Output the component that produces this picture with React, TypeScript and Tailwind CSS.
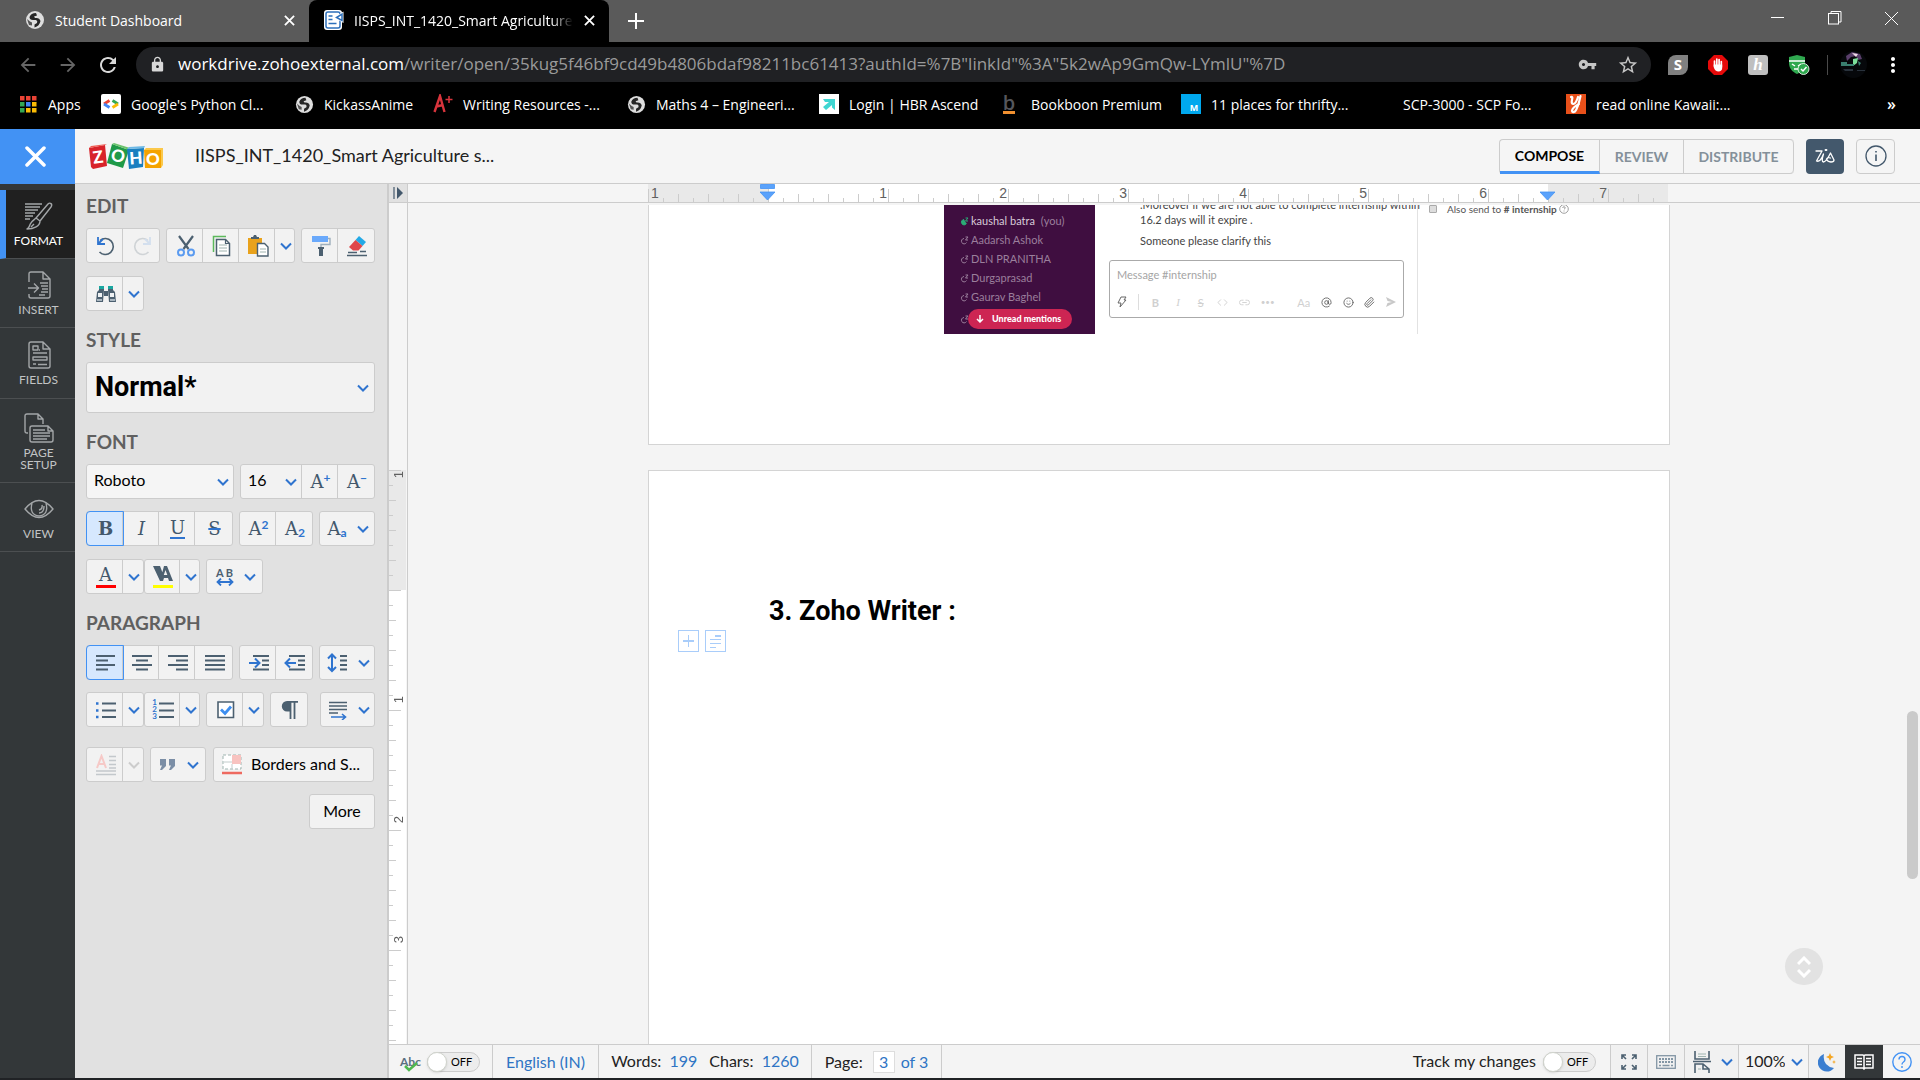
import React from "react";
import { MdArrowBack, MdArrowForward, MdRefresh, MdLock, MdVpnKey, MdStarBorder, MdMoreVert } from "react-icons/md";
import { FiAtSign, FiSmile, FiPaperclip, FiLink2, FiCode } from "react-icons/fi";

type Kids = { children?: React.ReactNode };

const SLATE = "#4c6070";
const BLUE = "#2f74cf";

/* ---------- browser chrome ---------- */

function Globe({ size = 20 }: { size?: number }) {
  return (
    <svg width={size} height={size} viewBox="0 0 20 20" aria-hidden="true">
      <circle cx="10" cy="10" r="9" fill="#dedede" />
      <path d="M11 3Q6 3 4.500 7q0 3 3.500 3h3q2 1 1 3l-2.500 1.500v3q5-1.500 6-6.500-1-3-4-3h-1.500L9 6.500l3-1z" fill="#262626" />
      <path d="M2 9l3 2.500 2 1v3L4 15z" fill="#555" />
    </svg>
  );
}

function WriterIcon() {
  return (
    <svg width="20" height="20" viewBox="0 0 20 20" aria-hidden="true">
      <rect x="0" y="0" width="18" height="20" rx="3" fill="#fff" />
      <rect x="2" y="2" width="14" height="16" rx="2" fill="#fff" stroke="#2c6fbb" strokeWidth="1.500" />
      <path d="M4.500 6h4M4.500 9.500h4M4.500 13.500h8" stroke="#2c6fbb" strokeWidth="1.600" />
      <path d="M19.500 1.500v11.500L10 7.500z" fill="#fff" />
      <path d="M18 4v6.500L12.500 7.500z" fill="#fff" stroke="#2c6fbb" strokeWidth="1.500" />
    </svg>
  );
}

function CloseX({ size = 11 }: { size?: number }) {
  return (
    <svg width={size} height={size} viewBox="0 0 12 12" aria-hidden="true">
      <path d="M1 1l10 10M11 1L1 11" stroke="#fff" strokeWidth="2" />
    </svg>
  );
}

function TabStrip() {
  return (
    <div className="flex h-[42px] items-stretch bg-[#5a5a5a] text-white">
      <div className="flex w-[309px] items-center pr-2.5 pb-0.5 pl-[25px] text-[14px]">
        <Globe />
        <span className="ml-2.5 grow">Student Dashboard</span>
        <button aria-label="Close tab" className="flex size-5 items-center justify-center"><CloseX /></button>
      </div>
      <div className="flex w-[300px] items-center rounded-t-lg bg-black pr-2.5 pb-0.5 pl-[15px] text-[14px]">
        <WriterIcon />
        <span className="ml-2.5 w-[219px] grow overflow-hidden whitespace-nowrap [mask-image:linear-gradient(90deg,#000_90%,transparent)]">
          IISPS_INT_1420_Smart Agriculture
        </span>
        <button aria-label="Close tab" className="ml-1.5 flex size-5 items-center justify-center"><CloseX /></button>
      </div>
      <button aria-label="New tab" className="flex w-[54px] items-center justify-center">
        <svg width="16" height="16" viewBox="0 0 16 16" aria-hidden="true"><path d="M8 0v16M0 8h16" stroke="#fff" strokeWidth="2" /></svg>
      </button>
      <div className="ml-auto flex pb-1.5">
        <button aria-label="Minimize" className="flex w-[57px] items-center justify-center">
          <svg width="13" height="2" aria-hidden="true"><rect width="13" height="1" fill="#fff" /></svg>
        </button>
        <button aria-label="Restore" className="flex w-[57px] items-center justify-center">
          <svg width="14" height="14" viewBox="0 0 14 14" fill="none" stroke="#fff" aria-hidden="true">
            <rect x=".5" y="2.500" width="10" height="10.500" /><path d="M3 2.500V.5h10v10.500h-2.500" />
          </svg>
        </button>
        <button aria-label="Close window" className="flex w-[57px] items-center justify-center">
          <svg width="13" height="13" viewBox="0 0 13 13" aria-hidden="true"><path d="M0 0l13 13M13 0L0 13" stroke="#fff" /></svg>
        </button>
      </div>
    </div>
  );
}

function AddressBar() {
  return (
    <div className="flex h-[45px] items-center bg-black pr-[15px] pl-4 text-[#d8d8d8]">
      <button aria-label="Back" className="mr-4 flex size-6 items-center justify-center text-[#666]"><MdArrowBack size={22} /></button>
      <button aria-label="Forward" className="mr-4 flex size-6 items-center justify-center text-[#666]"><MdArrowForward size={22} /></button>
      <button aria-label="Reload" className="mr-4 flex size-6 items-center justify-center"><MdRefresh size={24} /></button>
      <div className="flex h-[35px] grow items-center rounded-full bg-[#202124] pr-3 pl-[13px]">
        <MdLock size={17} />
        <div
          role="textbox"
          aria-label="Address"
          contentEditable
          suppressContentEditableWarning
          className="ml-3 grow pb-px text-[17px] whitespace-nowrap text-[#9a9a9a] outline-none"
        >
          <span className="text-white">workdrive.zohoexternal.com</span>/writer/open/35kug5f46bf9cd49b4806bdaf98211bc61413?authId=%7B"linkId"%3A"5k2wAp9GmQw-LYmlU"%7D
        </div>
        <button aria-label="Saved passwords" className="mr-5 text-[#c6c6c6]"><MdVpnKey size={19} /></button>
        <button aria-label="Bookmark this page" className="text-[#c6c6c6]"><MdStarBorder size={22} /></button>
      </div>
      <div className="ml-[17px] flex items-center gap-5">
        <button className="flex size-5 items-center justify-center rounded-tl-lg rounded-br-lg bg-[#808080] text-[15px] font-bold text-white">S</button>
        <button aria-label="Ad blocker">
          <svg width="20" height="20" viewBox="0 0 20 20" aria-hidden="true">
            <path d="M6 0h8l6 6v8l-6 6H6l-6-6V6z" fill="#e60a0a" />
            <path d="M6.500 11V6M8.800 10V4M11.100 10V4.500M13.300 12V6.500" stroke="#fff" strokeWidth="1.700" strokeLinecap="round" />
            <path d="M5.700 9.500h8.500v3.500c0 2-1.500 3.500-3.700 3.500S6.500 15 5.700 12z" fill="#fff" />
          </svg>
        </button>
        <button className="flex size-5 items-center justify-center rounded-[3px] bg-[#bfbfbf] font-['Liberation_Serif',serif] text-[17px] font-bold text-white italic">h</button>
        <button aria-label="Safe browsing">
          <svg width="22" height="20" viewBox="0 0 22 20" aria-hidden="true">
            <path d="M1 2l8-2 8 2v6c0 6-4 9-8 11C5 17 1 14 1 8z" fill="#2fa84f" />
            <path d="M1 6h16M4 9l3 2M13 9l-3 2M6 14h5" stroke="#fff" strokeWidth="1.500" />
            <circle cx="15.500" cy="14" r="5.500" fill="#2fa84f" stroke="#fff" strokeWidth=".8" />
            <path d="M13 14l2 2 3.500-4" fill="none" stroke="#fff" strokeWidth="1.500" />
          </svg>
        </button>
      </div>
      <div className="ml-[17px] h-5 w-px bg-[#4a4a4a]" />
      <button aria-label="Profile" className="ml-3">
        <svg width="27" height="27" viewBox="0 0 27 27" aria-hidden="true">
          <circle cx="13.500" cy="13.500" r="13.500" fill="#06080b" />
          <path d="M6 5l6-4 8 2 2 5-4 1-2-4-5 1-4 4z" fill="#5a3f6b" />
          <path d="M12 2l6 1-2 3z" fill="#f0d9e8" />
          <path d="M13 8l5-1-1 5-4 3z" fill="#7de09b" />
          <path d="M1 11h6v2h7v2H1zM18 10l3 2-2 3z" fill="#3a7f70" />
          <path d="M3 18h10v2H5zM17 19h8v1h-8z" fill="#29323c" />
        </svg>
      </button>
      <button aria-label="Browser menu" className="ml-3.5 text-white"><MdMoreVert size={24} /></button>
    </div>
  );
}

function AppsGrid() {
  const c = ["#ea4335", "#ea4335", "#ea4335", "#34a853", "#4285f4", "#fbbc05", "#34a853", "#fbbc05", "#fbbc05"];
  return (
    <svg width="17" height="17" viewBox="0 0 17 17" aria-hidden="true">
      {c.map((f, i) => <rect key={i} x={(i % 3) * 6} y={Math.floor(i / 3) * 6} width="4.500" height="4.500" fill={f} />)}
    </svg>
  );
}

function Bookmark({ icon, label, width }: { icon?: React.ReactNode; label: string; width: string }) {
  return (
    <a href="#" className={`flex items-center gap-2.5 ${width}`}>
      <span className="flex size-5 shrink-0 items-center justify-center">{icon}</span>
      <span className="whitespace-nowrap">{label}</span>
    </a>
  );
}

function BookmarksBar() {
  return (
    <nav aria-label="Bookmarks" className="flex h-[42px] items-center bg-black pb-2 pl-[18px] text-[14px] text-white">
      <Bookmark width="w-[83px]" label="Apps" icon={<AppsGrid />} />
      <Bookmark width="w-[193px]" label="Google's Python Cl..." icon={
        <svg width="20" height="20" viewBox="0 0 20 20" fill="none" aria-hidden="true">
          <rect width="20" height="20" rx="2" fill="#fff" />
          <path d="M8.500 6.500L3 10" stroke="#ea4335" strokeWidth="2.800" /><path d="M3 10l5.500 3.500" stroke="#4285f4" strokeWidth="2.800" />
          <path d="M11.500 6.500L17 10" stroke="#34a853" strokeWidth="2.800" /><path d="M17 10l-5.500 3.500" stroke="#fbbc05" strokeWidth="2.800" />
        </svg>} />
      <Bookmark width="w-[139px]" label="KickassAnime" icon={<Globe size={19} />} />
      <Bookmark width="w-[193px]" label="Writing Resources -..." icon={
        <svg width="20" height="20" viewBox="0 0 20 20" fill="none" stroke="#d8343c" aria-hidden="true">
          <path d="M1.500 18L7 2l4.500 16M3.500 12.500L10 11" strokeWidth="2.400" /><path d="M16 2v7M12.500 5.500h7" strokeWidth="1.500" />
        </svg>} />
      <Bookmark width="w-[193px]" label="Maths 4 – Engineeri..." icon={<Globe size={19} />} />
      <Bookmark width="w-[182px]" label="Login | HBR Ascend" icon={
        <svg width="20" height="20" viewBox="0 0 20 20" aria-hidden="true">
          <rect width="20" height="20" fill="#fff" /><path d="M4 5h12v11l-3-2.500V11l-6 5-3-3 6-5H6z" fill="#3fd6d2" />
        </svg>} />
      <Bookmark width="w-[180px]" label="Bookboon Premium" icon={
        <span className="mr-1 flex flex-col items-center border-b-[3px] border-[#f09030] text-[20px] leading-[17px] font-semibold text-[#55565c]">b</span>} />
      <Bookmark width="w-[192px]" label="11 places for thrifty..." icon={
        <span className="flex size-5 items-end justify-center bg-[#00a8ee] pl-1.5 text-[9px] font-bold">M</span>} />
      <Bookmark width="w-[193px]" label="SCP-3000 - SCP Fo..." />
      <Bookmark width="w-[193px]" label="read online Kawaii:..." icon={
        <svg width="20" height="20" viewBox="0 0 20 20" fill="none" stroke="#fff" strokeLinecap="round" aria-hidden="true">
          <rect width="20" height="20" fill="#e8501a" stroke="none" />
          <path d="M5 3Q7 2 6 6q-1 4 1.500 4Q10 9.500 12 3M14.500 2Q12 14 9 17.500q-3 1.500-3-1Q7 13 13 10" strokeWidth="2.200" />
        </svg>} />
      <button aria-label="More bookmarks" className="mr-6 ml-auto text-[16px] font-semibold">»</button>
    </nav>
  );
}

/* ---------- application header ---------- */

function ZohoLogo() {
  return (
    <svg width="74" height="27" viewBox="0 0 74 27" className="font-black" fontFamily="Lato, sans-serif" fontSize="17" fill="#fff" textAnchor="middle" role="img" aria-label="Zoho">
      <path d="M0 5l16-3 2 21-14 3-2-2z" fill="#d8232a" />
      <path d="M0 5l2-2 16-2-2 1z" fill="#ef5a50" />
      <path d="M23 1l17 6-6 18-16-5z" fill="#1f9a48" />
      <path d="M23 1l2-1 16 5-1 2z" fill="#6cc36c" />
      <path d="M38 6l17-1-1 19-14 2z" fill="#1a7fc0" />
      <path d="M38 6l2-2 16-1-1 2z" fill="#6db9e6" />
      <path d="M55 7h17v18H56z" fill="#f5a300" />
      <path d="M55 7l2-2h17l-2 2zM72 7l2-2v17l-2 3z" fill="#fbc84a" />
      <text x="9" y="20" transform="rotate(-8 9 14)">Z</text><text x="29" y="19" transform="rotate(16 29 13)">O</text><text x="47" y="21" transform="rotate(-4 47 15)">H</text><text x="64" y="22">O</text>
    </svg>
  );
}

function Header() {
  const tab = "flex items-center justify-center border-r border-[#ccc] text-[14px] font-bold text-[#84909a]";
  return (
    <header className="flex h-[55px] shrink-0 bg-[#f5f5f5]">
      <button aria-label="Close document" className="flex w-[75px] shrink-0 items-center justify-center bg-[#4292f4] pr-1">
        <svg width="21" height="21" viewBox="0 0 21 21" aria-hidden="true"><path d="M2 2l17 17M19 2L2 19" stroke="#fff" strokeWidth="3.500" strokeLinecap="round" /></svg>
      </button>
      <div className="flex grow items-center border-b border-[#ccc] pr-[25px] pl-3.5">
        <ZohoLogo />
        <h1 className="ml-8 pb-0.5 text-[18px] text-[#222]">IISPS_INT_1420_Smart Agriculture s...</h1>
        <div role="tablist" className="ml-auto flex h-[35px] items-stretch rounded-sm border border-r-0 border-[#ccc]">
          <button role="tab" aria-selected="true" className="-mb-px w-[100px] border-r border-b-[3px] border-r-[#ccc] border-b-[#4292f4] text-[14px] font-bold text-black">COMPOSE</button>
          <button role="tab" className={`w-[84px] ${tab}`}>REVIEW</button>
          <button role="tab" className={`w-[110px] rounded-r-sm ${tab}`}>DISTRIBUTE</button>
        </div>
        <button aria-label="Zia" className="ml-3 flex h-[35px] w-[38px] items-center justify-center rounded-sm bg-[#43586c]">
          <svg width="20" height="16" viewBox="0 0 20 16" fill="none" stroke="#fff" strokeWidth="1.300" strokeLinecap="round" strokeLinejoin="round" aria-hidden="true">
            <path d="M1 3h6L1.500 13q4 1.500 7-7Q6 14 8.500 14q3-.5 7-9l3.500 7q0 2-3 2-4-.5-4.500-3 1-2 4-1" /><path d="M10.500 2h1" strokeWidth="1.800" />
          </svg>
        </button>
        <button aria-label="Information" className="ml-3 flex h-[35px] w-[39px] items-center justify-center rounded-sm border border-[#ccc]">
          <svg width="22" height="22" viewBox="0 0 22 22" fill="none" stroke="#43586c" strokeWidth="1.300" aria-hidden="true">
            <circle cx="11" cy="11" r="10" /><path d="M11 9.500V16M11 6v1.500" strokeWidth="1.600" />
          </svg>
        </button>
      </div>
    </header>
  );
}

/* ---------- left rail ---------- */

function RailIcon({ children }: Kids) {
  return (
    <svg width="30" height="30" viewBox="0 0 30 30" fill="none" stroke="#a3a6a8" strokeWidth="1.400" strokeLinejoin="round" aria-hidden="true">{children}</svg>
  );
}

function Rail() {
  const item = "flex w-full flex-col items-center justify-center gap-1 border-b border-[#4c4f51] text-[12px] leading-3";
  return (
    <nav aria-label="Tools" className="flex w-[75px] shrink-0 flex-col bg-[#333739] pt-1.5 text-[#c2c4c5]">
      <button className={`${item} h-[69px] border-l-[6px] border-l-[#4292f4] bg-[#202020] pr-1 text-white`}>
        <RailIcon>
          <path d="M1 3h17M1 6h15M1 9h13M1 12h10M1 15h8M1 18h5" />
          <path d="M12 17L24 3c2-2 5 0 3 3L16 20zM12 17l4 3c0 5-6 8-13 8 3-1 2-4 4-6 1-2 3-3 5-5zM7 26l3-3" />
        </RailIcon>
        FORMAT
      </button>
      <button className={`${item} h-[69px] pl-0.5`}>
        <RailIcon>
          <path d="M5 12V4q0-2 2-2h12l7 7v17q0 2-2 2H7q-2 0-2-2v-2M19 2v7h7" />
          <path d="M4 18h10M10 13.500l4.500 4.500-4.500 4.500M16 13h8M17 16h7M18 19h6M17 22h7M15 25h6" />
        </RailIcon>
        INSERT
      </button>
      <button className={`${item} h-[71px] pl-0.5`}>
        <RailIcon>
          <path d="M19 2H7Q5 2 5 4v22q0 2 2 2h17q2 0 2-2V9zv7h7M9 6h5v4H9zM9 13h14M9 17h14v3H9zM9 24h3M14 24.500h9M16 10h-1" />
        </RailIcon>
        FIELDS
      </button>
      <button className={`${item} h-[84px] pt-0.5 pl-0.5`}>
        <RailIcon>
          <path d="M4 20H3q-2 0-2-2V3q0-2 2-2h11l5 5v5M14 1v5h5" />
          <path d="M24 13H8q-2 0-2 2v12q0 2 2 2h19q2 0 2-2v-9zv5h5M9 17h12M9 20h17M9 23h17M9 26h14" />
        </RailIcon>
        <span>PAGE<br />SETUP</span>
      </button>
      <button className={`${item} h-[69px] pl-0.5`}>
        <RailIcon>
          <path d="M1 15Q15-2 29 15 15 32 1 15z" /><path d="M8 9q-3 12 7 13 10-1 7-13M20 12q0 7-5 7M18 11q1 4-3 5" />
        </RailIcon>
        VIEW
      </button>
    </nav>
  );
}

/* ---------- format panel ---------- */

function Chevron({ faded = false }: { faded?: boolean }) {
  return (
    <svg width="12" height="8" viewBox="0 0 12 8" className="shrink-0" aria-hidden="true">
      <path d="M1 1.500l5 5 5-5" fill="none" stroke={faded ? "#ccc" : BLUE} strokeWidth="2" />
    </svg>
  );
}

function Group({ children }: Kids) {
  return <div className="flex h-[35px] shrink-0 divide-x divide-[#ccc] rounded-[3px] border border-[#ccc] bg-[#f2f2f2]">{children}</div>;
}

function Tool({ label, w = "w-9", active = false, children }: Kids & { label: string; w?: string; active?: boolean }) {
  return (
    <button
      aria-label={label}
      aria-pressed={active}
      className={`flex items-center justify-center gap-2.5 pl-0.5 ${w} ${active ? "rounded-l-[3px] bg-[#d6e8fe] outline-1 outline-[#4292f4]" : ""}`}
    >
      {children}
    </button>
  );
}

function Ico({ children, w = 22, h = 22 }: Kids & { w?: number; h?: number }) {
  return <svg width={w} height={h} viewBox={`0 0 ${w} ${h}`} fill="none" stroke={SLATE} strokeWidth="2" className="shrink-0" aria-hidden="true">{children}</svg>;
}

function Letter({ children, className = "" }: Kids & { className?: string }) {
  return <span className={`font-['DejaVu_Serif',serif] text-[18px] leading-5 text-[#43586c] ${className}`}>{children}</span>;
}

function Heading({ children }: Kids) {
  return <h2 className="mb-2.5 text-[19px] leading-6 font-bold text-[#606060]">{children}</h2>;
}

function Caret({ w = "w-5", faded = false }: { w?: string; faded?: boolean }) {
  return <Tool label="More options" w={w}><Chevron faded={faded} /></Tool>;
}

function FormatPanel() {
  const sub = "text-[12px] leading-3 font-bold text-[#2f74cf]";
  return (
    <aside className="flex w-[312px] shrink-0 flex-col bg-[#e1e1e1] pt-2.5 pl-[11px]">
      <Heading>EDIT</Heading>
      <div className="flex gap-[6px]">
        <Group>
          <Tool label="Undo"><Ico><path d="M5 5.500a8 8 0 1 1-.5 11.500" strokeWidth="1.600" /><path d="M3 2v7h7M3 9l5-5" stroke={BLUE} strokeWidth="1.800" /></Ico></Tool>
          <Tool label="Redo"><Ico><path d="M17 5.500a8 8 0 1 0 .5 11.500" stroke="#cfd3d6" strokeWidth="1.600" /><path d="M19 2v7h-7M19 9l-5-5" stroke="#d3dfee" strokeWidth="1.800" /></Ico></Tool>
        </Group>
        <Group>
          <Tool label="Cut"><Ico><path d="M4 1l9.500 13M18 1L8.500 14" strokeWidth="2.200" /><circle cx="6" cy="17.500" r="3" stroke="#5b9bf0" /><circle cx="16" cy="17.500" r="3" stroke="#5b9bf0" /></Ico></Tool>
          <Tool label="Copy"><Ico><path d="M15 1.500H2.500V17" stroke="#5cb95c" strokeWidth="1.500" /><path d="M5.500 4.500h9l4 4v12h-13z" fill="#fff" strokeWidth="1.500" /><path d="M8 10h8M8 13h8M8 16h8" stroke="#9fb4b0" strokeWidth="1.200" /><path d="M14.500 4.500v4h4" strokeWidth="1.200" /></Ico></Tool>
          <Tool label="Paste"><Ico><path d="M1 3h14v16H1z" fill="#e9a21c" stroke="none" /><path d="M4 4V2h2l1-2h2l1 2h2v2z" fill={SLATE} stroke="none" /><path d="M10.500 8.500h7l3.500 3.500v9H10.500z" fill="#fff" strokeWidth="1.400" /><path d="M13 14h6M13 17h6" stroke="#9fb4b0" strokeWidth="1.200" /></Ico></Tool>
          <Caret w="w-[19px]" />
        </Group>
        <Group>
          <Tool label="Format painter"><Ico><path d="M2 1h16v6H2z" fill="#6aa9fb" stroke="none" /><path d="M18 3.500h2v6h-9v3" stroke="#9fb0bd" strokeWidth="1.400" /><path d="M8 12h6v2h-1v7H9v-7H8z" fill={SLATE} stroke="none" /></Ico></Tool>
          <Tool label="Clear formatting"><Ico><path d="M13 1l7 6-3.500 4-7-6z" fill="#23a9e6" stroke="none" /><path d="M9.500 5l7 6-4 4.500H7L3 12z" fill="#e0474a" stroke="none" /><path d="M1 20.500h20M2 17.500h9M14 16.500h6" strokeWidth="1.500" /></Ico></Tool>
        </Group>
      </div>
      <div className="mt-[13px] flex">
        <Group>
          <Tool label="Find and replace">
            <Ico><path d="M4 4h5v3l-1 12H1L2 9l2-2zM18 4h-5v3l1 12h7L20 9l-2-2zM9 8h4v5H9z" fill={SLATE} stroke="none" /><path d="M4 3h5v3H4zM13 3h5v3h-5z" fill="#1aa7a0" stroke="none" /><path d="M3 10h4v4H3zM15 10h4v4h-4z" fill="#eef1f3" stroke="none" /><path d="M2 16h5v2H2zM15 16h5v2h-5z" fill="#a9b6c0" stroke="none" /></Ico>
          </Tool>
          <Caret />
        </Group>
      </div>

      <div className="h-[17px]" />
      <Heading>STYLE</Heading>
      <div className="flex h-[51px] w-[289px] items-center rounded-[3px] border border-[#ccc] bg-[#f2f2f2] pr-[5px]">
        <select aria-label="Paragraph style" className="h-full grow appearance-none bg-transparent pl-2 font-['Roboto'] text-[27px] font-bold text-black outline-none">
          <option>Normal*</option>
        </select>
        <Chevron />
      </div>

      <div className="h-[17px]" />
      <Heading>FONT</Heading>
      <div className="flex gap-1.5">
        <div className="flex h-[35px] w-[148px] items-center rounded-[3px] border border-[#ccc] bg-[#f5f5f5] pr-1">
          <select aria-label="Font family" className="h-full w-full appearance-none bg-transparent pb-[3px] pl-[7px] text-[16px] text-black outline-none"><option>Roboto</option></select>
          <Chevron />
        </div>
        <Group>
          <div className="flex w-[61px] items-center pr-1">
            <select aria-label="Font size" className="h-full w-full appearance-none bg-transparent pb-[3px] pl-[7px] text-[16px] text-black outline-none"><option>16</option></select>
            <Chevron />
          </div>
          <Tool label="Increase font size"><span className="flex"><Letter>A</Letter><span className={sub}>+</span></span></Tool>
          <Tool label="Decrease font size"><span className="flex"><Letter>A</Letter><span className={sub}>−</span></span></Tool>
        </Group>
      </div>
      <div className="mt-3 flex gap-1.5">
        <Group>
          <Tool label="Bold" active><Letter className="font-bold">B</Letter></Tool>
          <Tool label="Italic"><Letter className="italic">I</Letter></Tool>
          <Tool label="Underline"><Letter className="border-b-2 border-[#2f74cf] leading-[18px]">U</Letter></Tool>
          <Tool label="Strikethrough" w="w-[37px]"><Letter className="line-through decoration-[#2f74cf] decoration-2">S</Letter></Tool>
        </Group>
        <Group>
          <Tool label="Superscript"><span className="flex"><Letter>A</Letter><span className={sub}>2</span></span></Tool>
          <Tool label="Subscript"><span className="flex items-end"><Letter>A</Letter><span className={sub}>2</span></span></Tool>
        </Group>
        <Group>
          <Tool label="Change case" w="w-[54px]"><span className="flex items-end"><Letter>A</Letter><span className={sub}>a</span></span><Chevron /></Tool>
        </Group>
      </div>
      <div className="mt-[13px] flex">
        <Group>
          <Tool label="Font color"><Letter className="w-5 border-b-[3px] border-[#f00] leading-[20px]">A</Letter></Tool>
          <Caret />
        </Group>
        <Group>
          <Tool label="Highlight color" w="w-[35px]">
            <Ico><path d="M1 0h7l3 8-3 7zM12 0h3l6 15h-4l-1-3h-4l-1 3H8z" fill={SLATE} stroke="none" /><path d="M13.500 4l1.800 5h-3.500z" fill="#f2f2f2" stroke="none" /><path d="M1 20.500h20" stroke="#ff0" strokeWidth="3" /></Ico>
          </Tool>
          <Caret w="w-[19px]" />
        </Group>
        <div className="w-1.5" />
        <Group>
          <Tool label="Character spacing" w="w-[55px]">
            <span className="flex flex-col items-center text-[11px] leading-[11px] font-bold text-[#4c6070]">A B
              <Ico w={18} h={8}><path d="M1 4h16M5 .5L1.500 4 5 7.500M13 .5L16.500 4 13 7.500" stroke={BLUE} strokeWidth="1.800" /></Ico>
            </span>
            <Chevron />
          </Tool>
        </Group>
      </div>

      <div className="h-[17px]" />
      <Heading>PARAGRAPH</Heading>
      <div className="flex gap-1.5">
        <Group>
          <Tool label="Align left" active><Ico><path d="M1 4h19M1 8.500h12M1 13h19M1 17.500h12" /></Ico></Tool>
          <Tool label="Align center"><Ico><path d="M1 4h20M5 8.500h12M1 13h20M5 17.500h12" /></Ico></Tool>
          <Tool label="Align right"><Ico><path d="M1 4h20M9 8.500h12M1 13h20M9 17.500h12" /></Ico></Tool>
          <Tool label="Justify" w="w-[37px]"><Ico><path d="M1 4h20M1 8.500h20M1 13h20M1 17.500h20" /></Ico></Tool>
        </Group>
        <Group>
          <Tool label="Increase indent"><Ico><path d="M5 4h16M14 8.500h7M14 13h7M5 17.500h16" /><path d="M1 11h10M7 6.500l4.500 4.500L7 15.500" stroke={BLUE} /></Ico></Tool>
          <Tool label="Decrease indent"><Ico><path d="M5 4h16M14 8.500h7M14 13h7M5 17.500h16" /><path d="M12 11H2M6 6.500L1.500 11 6 15.500" stroke={BLUE} /></Ico></Tool>
        </Group>
        <Group>
          <Tool label="Line spacing" w="w-[54px]"><Ico><path d="M14 4h7M14 8.500h7M14 13h7M14 17.500h7" /><path d="M6 3v16M2 6.500l4-4 4 4M2 15l4 4 4-4" stroke={BLUE} /></Ico><Chevron /></Tool>
        </Group>
      </div>
      <div className="mt-3 flex">
        <Group>
          <Tool label="Bullet list"><Ico><path d="M7 4.500h14M7 11.500h14M7 18h14" /><path d="M1 4.500h2.500M1 11.500h2.500M1 18h2.500" stroke={BLUE} strokeWidth="2.500" /></Ico></Tool>
          <Caret />
        </Group>
        <Group>
          <Tool label="Numbered list" w="w-[35px]">
            <span className="flex items-center gap-0.5"><span className="text-[8px] leading-[7px] font-bold text-[#2f74cf]">1<br />2<br />3</span><Ico w={15}><path d="M0 4.500h15M0 11.500h15M0 18h15" /></Ico></span>
          </Tool>
          <Caret w="w-[19px]" />
        </Group>
        <div className="w-1.5" />
        <Group>
          <Tool label="Checklist"><Ico><path d="M3 3h15.500v15.500H3z" fill="#fff" strokeWidth="1.600" /><path d="M6 10.500l4 4 6-7" stroke="#3d8ef0" strokeWidth="2.800" /></Ico></Tool>
          <Caret />
        </Group>
        <div className="w-1.5" />
        <Group>
          <Tool label="Show formatting marks"><Ico><path d="M17 2H8a5.200 5.200 0 0 0 0 10.400h3V2z" fill={SLATE} stroke="none" /><path d="M10.500 2.800H19M11.500 2v18M15.500 2v18" strokeWidth="1.800" /></Ico></Tool>
        </Group>
        <div className="w-3" />
        <Group>
          <Tool label="Text direction" w="w-[53px]"><Ico w={20} h={20}><path d="M1 2.500h18M1 6h18M1 9.500h18M1 13h9" strokeWidth="1.600" /><path d="M3 17h14M14 14l3.500 3-3.500 3" stroke={BLUE} strokeWidth="1.600" /></Ico><Chevron /></Tool>
        </Group>
      </div>
      <div className="mt-5 flex">
        <Group>
          <Tool label="Drop cap"><Ico><path d="M14 2.500h7M14 6.500h7M14 10.500h7M14 14h7M1 17h20M1 20.500h20" stroke="#c3c8cc" strokeWidth="1.300" /><path d="M2 14L6.500 2 11 14M4 10h5" stroke="#f6c9c7" /></Ico></Tool>
          <Caret faded />
        </Group>
        <div className="w-1.5" />
        <Group>
          <Tool label="Quote" w="w-[54px]"><Ico w={18}><path d="M1 5h6v7l-4 4H1l2-4.500H1zM10 5h6v7l-4 4h-2l2-4.500h-2z" fill="#7b8ea6" stroke="none" /></Ico><Chevron /></Tool>
        </Group>
        <div className="w-[7px]" />
        <Group>
          <button className="flex w-[159px] items-center gap-2 pb-0.5 pl-[7px] text-[16px] text-black">
            <Ico><path d="M2 2h18v14H2z" fill="#fff" stroke="#9fb4b0" strokeWidth="1" strokeDasharray="3 2" /><path d="M11 2h9v9h-9z" fill="#f8c3c0" stroke="none" /><path d="M11 11v5M3 9h8" stroke="#c3cccc" strokeWidth="1" /><path d="M1 20h20" stroke="#ee6a60" strokeWidth="2.500" /></Ico>
            Borders and S...
          </button>
        </Group>
      </div>
      <div className="mt-3 mr-3 flex justify-end">
        <Group><button className="w-16 pb-0.5 text-[16px] text-black">More</button></Group>
      </div>
    </aside>
  );
}

/* ---------- rulers ---------- */

const EIGHTHS = [0, 1, 2, 3, 4, 5, 6, 7];

function HorizontalRuler() {
  const inches = [
    { first: "1", last: "" }, { first: "", last: "1" }, { first: "", last: "2" }, { first: "", last: "3" }, { first: "", last: "4" },
    { first: "", last: "5" }, { first: "", last: "6" }, { first: "", last: "7" },
  ];
  const cell = (i: number, k: number) => {
    const size = k === 0 ? "h-[13px]" : k % 2 === 0 ? "h-2" : "h-1";
    const text = k === 0 ? inches[i]?.first : k === 7 ? inches[i]?.last : "";
    const shade = i === 0 || i * 8 + k >= 60 ? "bg-[#e9e9e9]" : "bg-white";
    return (
      <div key={`${i}-${k}`} className={`flex w-[15px] items-end ${k === 0 ? "gap-0.5" : "justify-between pr-px"} ${shade}`}>
        <span className={`w-px bg-[#ccc] ${size}`} />
        <span className="self-center text-[14px] leading-[18px]">{text}</span>
      </div>
    );
  };
  return (
    <div className="relative flex h-[18px] font-['Liberation_Sans'] text-[#606060]">
      {inches.map((_, i) => EIGHTHS.map((k) => cell(i, k)))}
      {[0, 1, 2, 3].map((k) => cell(8, k))}
      <svg width="15" height="18" viewBox="0 0 15 18" className="absolute top-0 left-28" aria-hidden="true">
        <path d="M.5 .5h14v4H.5zM0 8h15l-7.500 8z" fill="#5aa2fb" stroke="#4292f4" strokeWidth=".8" />
      </svg>
      <svg width="15" height="18" viewBox="0 0 15 18" className="absolute top-0 left-[892px]" aria-hidden="true"><path d="M0 8h15l-7.500 8z" fill="#5aa2fb" stroke="#4292f4" strokeWidth=".8" /></svg>
    </div>
  );
}

function VerticalRuler() {
  const inches = ["", "1", "2", "3", ""];
  return (
    <div className="flex w-[19px] shrink-0 flex-col overflow-hidden border-r border-[#ccc] bg-[#f5f5f5] pt-[267px] font-['Liberation_Sans'] text-[13px] text-[#606060]">
      {inches.map((n, i) => EIGHTHS.map((k) => (
        <div key={`${i}-${k}`} className={`flex h-[15px] w-[17px] shrink-0 items-start justify-between ${i === 0 ? "bg-[#e9e9e9]" : "bg-white"}`}>
          <span className={`h-px bg-[#ccc] ${k === 0 ? "w-3" : k % 2 === 0 ? "w-[7px]" : "w-1"}`} />
          {(k === 7 && n) || (k === 0 && i === 0) ? (
            <span className="mt-px -ml-3 rotate-180 leading-[14px] [writing-mode:vertical-rl]">{n || "1"}</span>
          ) : null}
        </div>
      )))}
    </div>
  );
}

/* ---------- document ---------- */

function Snooze({ online = false }: { online?: boolean }) {
  return (
    <svg width="9" height="9" viewBox="0 0 9 9" fill="none" stroke={online ? "#2bac76" : "#9b7f9c"} strokeWidth="1" aria-hidden="true">
      <path d="M4 2.500a2.700 2.700 0 1 0 2.500 4" fill={online ? "#2bac76" : "none"} /><path d="M5.500 1h2.500l-2.500 3H8" />
    </svg>
  );
}

function EmbeddedChat() {
  return (
    <figure className="ml-[295px] flex h-[129px] items-stretch overflow-hidden text-[12px]">
      <div className="flex w-[151px] flex-col bg-[#3f0e40] pt-[7px] pl-4 text-[11px] text-[#9b7f9c]">
        <p className="flex h-[19px] items-center gap-0.5"><Snooze online /><span className="text-[#d8cbd8]">kaushal batra</span><span className="ml-1">(you)</span></p>
        {["Aadarsh Ashok", "DLN PRANITHA", "Durgaprasad", "Gaurav Baghel"].map((n) => (
          <p key={n} className="flex h-[19px] items-center gap-0.5"><Snooze />{n}</p>
        ))}
        <div className="mt-0.5 flex h-5 items-center">
          <Snooze />
          <button className="-ml-px flex h-5 w-[104px] items-center gap-2 rounded-full bg-[#cd2553] pl-2 text-[9px] font-black whitespace-nowrap text-white">
            <svg width="8" height="8" viewBox="0 0 8 8" fill="none" stroke="#fff" strokeWidth="1.500" aria-hidden="true"><path d="M4 0v7M1 4l3 3 3-3" /></svg>
            Unread mentions
          </button>
        </div>
      </div>
      <div className="flex w-[323px] flex-col justify-end border-r border-[#e2e2e2] pr-[13px] pb-4 pl-3.5 text-[11px] leading-[15px] text-[#444]">
        <p className="ml-[31px] shrink-0 whitespace-nowrap">.Moreover if we are not able to complete internship within<br />16.2 days will it expire .</p>
        <p className="mt-1.5 ml-[31px] shrink-0">Someone please clarify this</p>
        <div className="mt-3 flex h-[58px] shrink-0 flex-col justify-between rounded-[3px] border border-[#aaa] px-[7px] pt-1.5 pb-[7px]">
          <input aria-label="Message #internship" placeholder="Message #internship" className="w-full bg-transparent outline-none placeholder:text-[#a5a5a5]" />
          <div className="flex items-center justify-between text-[11px] text-[#d0d0d0]">
            <svg width="10" height="12" viewBox="0 0 10 12" fill="none" stroke="#666" aria-hidden="true"><path d="M4 1h5L7 4h2L3 11l1-4H1z" /></svg>
            <span className="h-4 w-px bg-[#ddd]" />
            <b className="w-3 text-center">B</b><i className="w-3 text-center font-['Liberation_Serif']">I</i><s className="w-3 text-center">S</s>
            <FiCode size={11} /><FiLink2 size={11} /><span className="mr-3 text-[8px]">•••</span>
            <span>Aa</span>
            <FiAtSign size={11} color="#666" /><FiSmile size={11} color="#666" /><FiPaperclip size={11} color="#666" />
            <svg width="10" height="10" viewBox="0 0 10 10" fill="#c8c8c8" aria-hidden="true"><path d="M0 0l10 5-10 5 1.500-4L6 5 1.500 4z" /></svg>
          </div>
        </div>
      </div>
      <div className="flex h-2 items-center pl-[11px] text-[10px] whitespace-nowrap text-[#555]">
        <label className="flex items-center gap-2.5">
          <input type="checkbox" className="size-2 appearance-none rounded-[1px] border border-[#aaa] bg-[#ddd]" />
          <span>Also send to <b># internship</b></span>
        </label>
        <svg width="10" height="10" viewBox="0 0 10 10" fill="none" stroke="#888" className="ml-0.5" strokeWidth=".8" aria-hidden="true"><circle cx="5" cy="5" r="4.300" /><path d="M3.700 4q0-1.300 1.300-1.300T6.200 4q0 .6-1.200 1.300M5 6.500v1" /></svg>
      </div>
    </figure>
  );
}

function Canvas() {
  return (
    <div className="relative flex grow justify-center overflow-hidden bg-[#f4f4f4] pt-0.5 pr-2.5">
      <main className="flex w-[1022px] shrink-0 flex-col gap-[25px]">
        <section className="h-[240px] shrink-0 border border-t-0 border-[#d4d4d4] bg-white"><EmbeddedChat /></section>
        <section className="grow border border-b-0 border-[#d4d4d4] bg-white">
          <h2 className="mt-[124px] ml-[120px] font-['Roboto'] text-[27px] leading-8 font-bold text-black">3. Zoho Writer :</h2>
          <div className="mt-[3px] ml-[29px] flex gap-1.5">
            <button aria-label="Insert">
              <svg width="21" height="22" viewBox="0 0 21 22" fill="none" stroke="#a9cdfa" aria-hidden="true"><rect x=".5" y=".5" width="20" height="21" /><path d="M10.500 5v12" /><path d="M5 11h11" strokeWidth="2" /></svg>
            </button>
            <button aria-label="Paragraph options">
              <svg width="21" height="22" viewBox="0 0 21 22" fill="none" stroke="#a9cdfa" aria-hidden="true"><rect x=".5" y=".5" width="20" height="21" /><path d="M10 6h6" strokeWidth="2" /><path d="M5 9.500h11M5 13.500h11M5 17.500h6" /></svg>
            </button>
          </div>
        </section>
      </main>
      <div className="absolute top-[508px] right-0.5 h-[168px] w-[11px] rounded-full bg-[#cacaca]" />
      <button aria-label="Jump to page" className="absolute right-[97px] bottom-[59px] flex h-[37px] w-[38px] items-center justify-center rounded-full bg-[#e2e2e2]">
        <svg width="14" height="22" viewBox="0 0 14 22" fill="none" stroke="#fff" strokeWidth="3" aria-hidden="true"><path d="M1 8l6-6 6 6M1 14l6 6 6-6" /></svg>
      </button>
    </div>
  );
}

/* ---------- status bar ---------- */

function Toggle({ label }: { label: string }) {
  return (
    <label className="flex h-5 w-[53px] shrink-0 items-center rounded-full border border-[#ccc] bg-[#ececec]">
      <input type="checkbox" aria-label={label} className="-ml-px size-5 appearance-none rounded-full border border-[#d0d4cc] bg-white shadow-sm" />
      <span className="ml-1 text-[11px] leading-4 text-black">OFF</span>
    </label>
  );
}

function StatusBar() {
  const cell = "flex items-center justify-center border-l border-[#ccc]";
  return (
    <footer className="flex h-[34px] shrink-0 items-stretch border-t border-[#ccc] bg-[#f4f4f4] text-[16px] text-[#222]">
      <div className="flex w-[103px] items-center gap-1.5 pl-[11px]">
        <span className="relative text-[12px] leading-4 font-bold text-[#5b6f80]">
          Abc
          <svg width="14" height="10" viewBox="0 0 14 10" fill="none" stroke="#4fb84f" strokeWidth="2.500" className="absolute top-2 left-1" aria-hidden="true"><path d="M1 4l4 4 8-7" /></svg>
        </span>
        <Toggle label="Spell check" />
      </div>
      <button className={`${cell} w-[106px] text-[#2f74c4]`}>English (IN)</button>
      <div className={`${cell} w-[213px] gap-3 pb-px`}>
        <span>Words: <span className="ml-1 text-[#2f74c4]">199</span></span>
        <span>Chars: <span className="ml-1 text-[#2f74c4]">1260</span></span>
      </div>
      <div className={`${cell} w-[131px] border-r`}>
        <label htmlFor="page-number">Page:</label>
        <input id="page-number" defaultValue="3" className="ml-2.5 h-[22px] w-[22px] border border-[#ddd] bg-white text-center text-[#2f74c4] outline-none" />
        <span className="ml-1.5 text-[#2f74c4]">of 3</span>
      </div>
      <div className="mr-3.5 ml-auto flex items-center gap-[7px]"><span className="pb-0.5">Track my changes</span><Toggle label="Track my changes" /></div>
      <button aria-label="Full screen" className={`${cell} w-[37px] bg-[#f1f1f1]`}>
        <svg width="16" height="16" viewBox="0 0 16 16" fill="none" stroke={SLATE} strokeWidth="1.600" aria-hidden="true"><path d="M1 5V1h4M11 1h4v4M15 11v4h-4M5 15H1v-4M1 1l4 4M15 1l-4 4M15 15l-4-4M1 15l4-4" /></svg>
      </button>
      <button aria-label="Keyboard" className={`${cell} w-[37px] bg-[#f1f1f1]`}>
        <svg width="20" height="14" viewBox="0 0 20 14" fill="none" stroke="#8396a5" strokeWidth="1.300" aria-hidden="true"><rect x=".7" y=".7" width="18.600" height="12.600" /><path d="M3 4h14M3 7h14" strokeDasharray="2 1" strokeWidth="2" /><path d="M3 10.500h2M6.500 10.500h7M15 10.500h2" strokeWidth="1.600" /></svg>
      </button>
      <button aria-label="Page break view" className={`${cell} w-[54px] gap-2.5 bg-[#f1f1f1] pl-0.5`}>
        <svg width="18" height="22" viewBox="0 0 18 22" fill="none" stroke={SLATE} strokeWidth="1.600" aria-hidden="true"><path d="M2 0v8h14V0M2 22v-9h8l6 5v4M10 13v5h6M0 10.500h18" /><path d="M5 3h8M5 5.500h8M5 18h3" stroke="#9fb4b0" strokeWidth="1" /></svg>
        <Chevron />
      </button>
      <div className={`${cell} w-[70px] gap-1.5 pr-[5px] pl-1.5`}>
        <select aria-label="Zoom" className="w-full appearance-none bg-transparent pb-px outline-none"><option>100%</option></select>
        <Chevron />
      </div>
      <button aria-label="Night mode" className={`${cell} w-[37px] bg-[#f1f1f1]`}>
        <svg width="18" height="20" viewBox="0 0 18 20" aria-hidden="true"><path d="M6 2a9 9 0 1 0 10 14Q4 14 6 2z" fill="#3b7ed0" /><path d="M12 1l1.200 2.800L16 5l-2.800 1.200L12 9l-1.200-2.800L8 5l2.800-1.200zM16 8l.6 1.400L18 10l-1.400.6L16 12l-.6-1.400L14 10l1.400-.6z" fill="#f5a623" /></svg>
      </button>
      <button aria-label="Reader view" className="flex w-[38px] items-center justify-center bg-[#333739]">
        <svg width="20" height="16" viewBox="0 0 20 16" fill="none" stroke="#fff" strokeWidth="1.500" aria-hidden="true"><path d="M1 1h8l1 1 1-1h8v13h-8l-1 1-1-1H1zM10 2v13" /><path d="M3 4.500h5M3 7.500h5M3 10.500h5M12 4.500h5M12 7.500h5M12 10.500h5" strokeWidth="1.300" /></svg>
      </button>
      <button aria-label="Help" className="flex w-[37px] items-center justify-center bg-[#f4f4f4]">
        <svg width="20" height="20" viewBox="0 0 20 20" fill="none" stroke="#4292f4" strokeWidth="1.400" aria-hidden="true"><circle cx="10" cy="10" r="9.200" /><path d="M7 7.500q0-3 3-3t3 3q0 1.500-1.500 2.500T10 12.500M10 14v2" /></svg>
      </button>
    </footer>
  );
}

export default function App() {
  return (
    <div className="flex h-screen flex-col overflow-hidden font-['Lato',sans-serif]">
      <div className="shrink-0 font-['Open_Sans',sans-serif]">
        <TabStrip />
        <AddressBar />
        <BookmarksBar />
      </div>
      <Header />
      <div className="flex min-h-0 grow">
        <Rail />
        <FormatPanel />
        <div className="flex min-w-0 grow flex-col border-l-2 border-[#ccc]">
          <div className="flex h-[19px] shrink-0 border-b border-[#ccc] bg-[#f5f5f5]">
            <button aria-label="Collapse panel" className="flex w-[19px] shrink-0 items-center justify-center border-r border-[#ccc] bg-[#e1e1e1]">
              <svg width="10" height="12" viewBox="0 0 10 12" aria-hidden="true"><path d="M1 0v12" stroke="#43586c" strokeWidth="1.200" /><path d="M4 0l6 6-6 6z" fill="#43586c" /></svg>
            </button>
            <div className="flex grow justify-center pr-3"><HorizontalRuler /></div>
          </div>
          <div className="flex min-h-0 grow">
            <VerticalRuler />
            <Canvas />
          </div>
          <StatusBar />
        </div>
      </div>
      <div className="h-0.5 shrink-0 bg-[#202225]" />
    </div>
  );
}
